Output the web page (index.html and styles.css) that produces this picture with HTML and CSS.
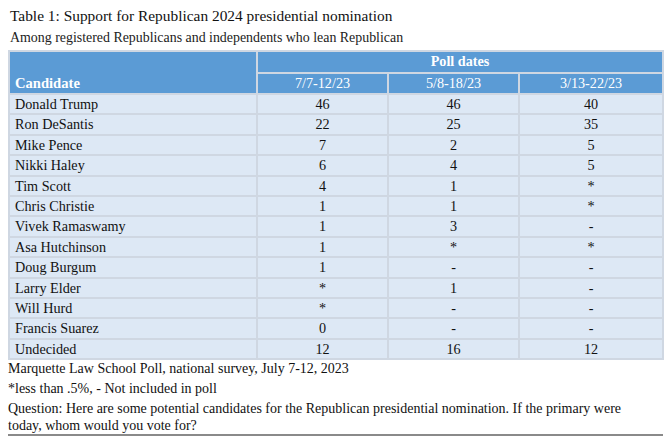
FILE: index.html
```html
<!DOCTYPE html>
<html lang="en">
<head>
<meta charset="utf-8">
<title>Table 1</title>
<link rel="stylesheet" href="styles.css">
</head>
<body>
<div class="page">
  <h1 class="title"><span class="label">Table 1</span>: Support for Republican 2024 presidential nomination</h1>
  <p class="subtitle">Among registered Republicans and independents who lean Republican</p>
  <table class="poll">
    <colgroup>
      <col class="c-name">
      <col class="c-num">
      <col class="c-num">
      <col class="c-last">
    </colgroup>
    <thead>
      <tr class="h1">
        <th class="cand" rowspan="2">Candidate</th>
        <th class="group" colspan="3">Poll dates</th>
      </tr>
      <tr class="h2">
        <th class="date">7/7-12/23</th>
        <th class="date">5/8-18/23</th>
        <th class="date">3/13-22/23</th>
      </tr>
    </thead>
    <tbody>
      <tr><td>Donald Trump</td><td>46</td><td>46</td><td>40</td></tr>
      <tr><td>Ron DeSantis</td><td>22</td><td>25</td><td>35</td></tr>
      <tr><td>Mike Pence</td><td>7</td><td>2</td><td>5</td></tr>
      <tr><td>Nikki Haley</td><td>6</td><td>4</td><td>5</td></tr>
      <tr><td>Tim Scott</td><td>4</td><td>1</td><td>*</td></tr>
      <tr><td>Chris Christie</td><td>1</td><td>1</td><td>*</td></tr>
      <tr><td>Vivek Ramaswamy</td><td>1</td><td>3</td><td>-</td></tr>
      <tr><td>Asa Hutchinson</td><td>1</td><td>*</td><td>*</td></tr>
      <tr><td>Doug Burgum</td><td>1</td><td>-</td><td>-</td></tr>
      <tr><td>Larry Elder</td><td>*</td><td>1</td><td>-</td></tr>
      <tr><td>Will Hurd</td><td>*</td><td>-</td><td>-</td></tr>
      <tr><td>Francis Suarez</td><td>0</td><td>-</td><td>-</td></tr>
      <tr><td>Undecided</td><td>12</td><td>16</td><td>12</td></tr>
    </tbody>
  </table>
  <div class="notes">
    <p>Marquette Law School Poll, national survey, July 7-12, 2023</p>
    <p>*less than .5%, - Not included in poll</p>
    <p class="question">Question: Here are some potential candidates for the Republican presidential nomination. If the primary were today, whom would you vote for?</p>
  </div>
</div>
</body>
</html>
```
FILE: styles.css
```css
html, body {
  margin: 0;
  padding: 0;
  background: #ffffff;
}

body {
  font-family: "Liberation Serif", "Times New Roman", serif;
  color: #111111;
}

.page {
  padding: 6px 7px 0 8px;
  width: 655px;
}

.title {
  margin: 0 0 0 2px;
  font-size: 15.4px;
  line-height: 20px;
  font-weight: normal;
}

.title .label {
  font-weight: normal;
}

.subtitle {
  margin: 3px 0 0 2px;
  font-size: 13.9px;
  line-height: 17px;
  color: #222222;
}

.poll {
  margin-top: 4px;
  width: 656px;
  border-collapse: collapse;
  border: 2px solid #d3d8df;
  font-size: 14.2px;
  table-layout: fixed;
}

.c-name { width: 248px; }
.c-num { width: 131px; }
.c-last { width: 144px; }

.poll th,
.poll td {
  border: 2px solid #cfd7e2;
  padding: 0;
}

.poll thead th {
  background: #5b9bd5;
  color: #ffffff;
}

.h1 th {
  height: 19.5px;
  line-height: 19.5px;
}

.h2 th {
  height: 19.5px;
  line-height: 19.5px;
}

.cand {
  text-align: left;
  vertical-align: bottom;
  padding-left: 5px !important;
  font-weight: bold;
  font-size: 14.6px;
}

.group {
  font-weight: bold;
  text-align: center;
}

.date {
  font-weight: normal;
  text-align: center;
}

.poll tbody td {
  background: #dde8f5;
  height: 18.4px;
  line-height: 18.4px;
  text-align: center;
}

.poll tbody td:first-child {
  text-align: left;
  padding-left: 5px;
}

.notes {
  font-size: 14px;
  line-height: 17px;
  border-bottom: 2px solid #8a8a8a;
  width: 655px;
}

.notes p {
  margin: 0 0 3px 0;
}

.notes p.question {
  margin-bottom: 0;
  max-width: 628px;
}
```
